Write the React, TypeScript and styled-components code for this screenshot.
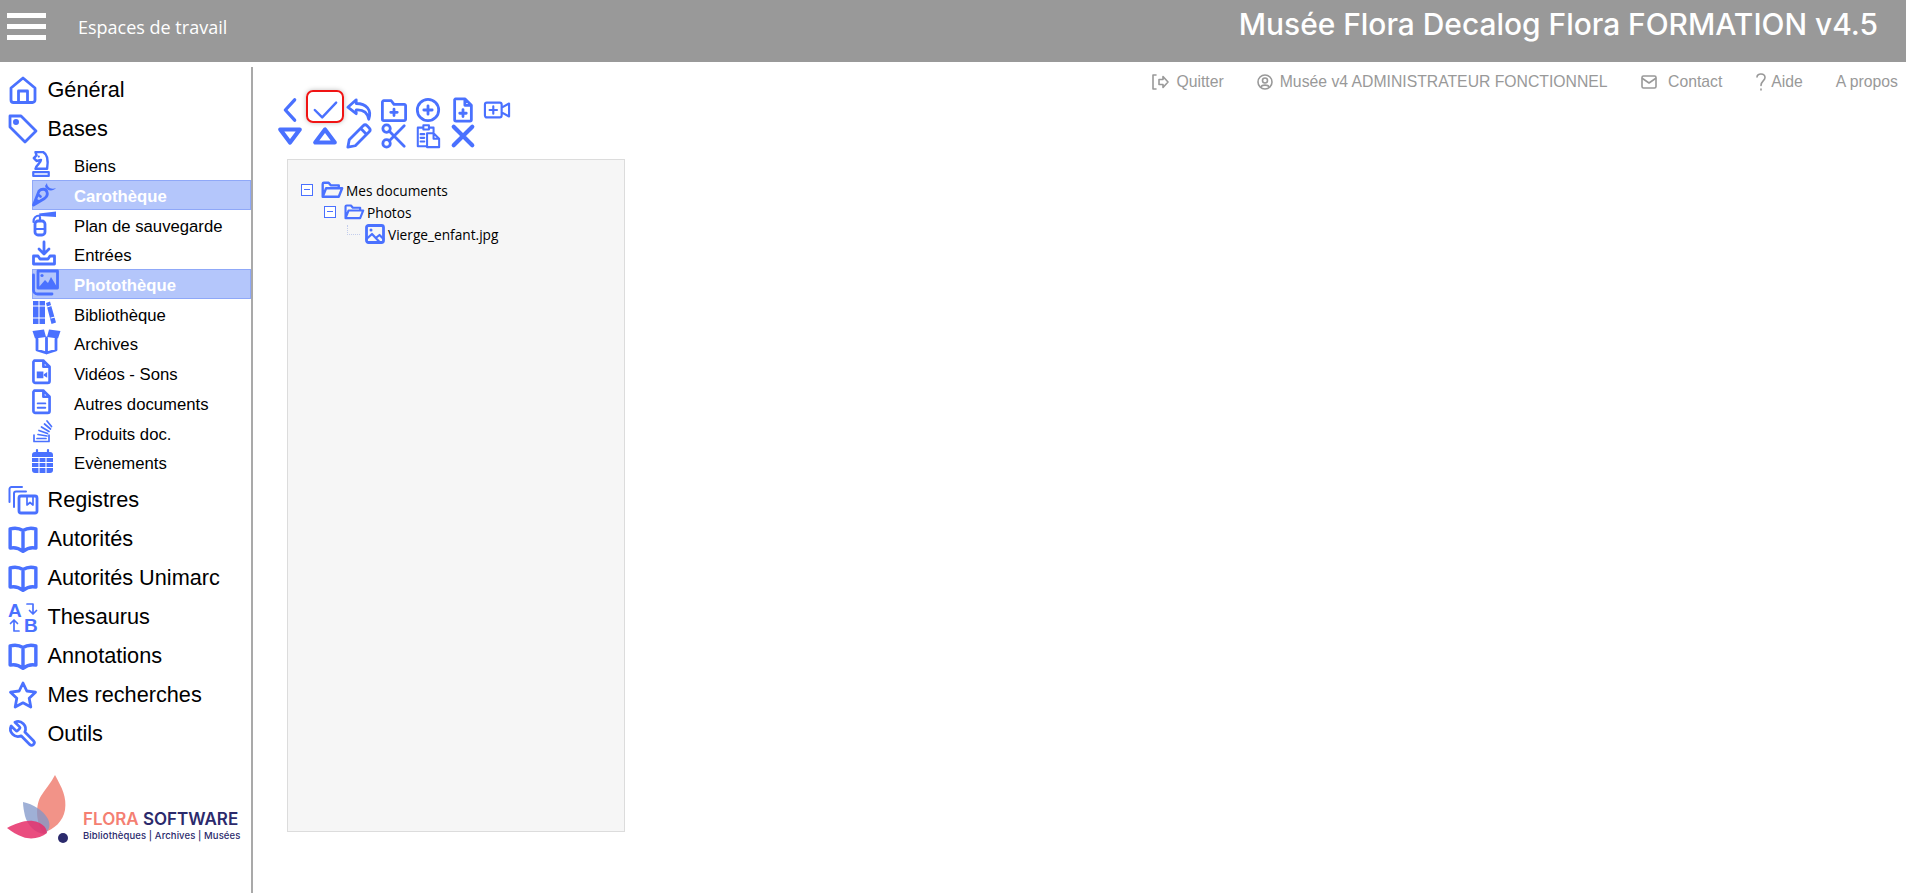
import React from 'react';
import styled, { createGlobalStyle } from 'styled-components';

const BLUE = '#4a71ff';

const GlobalStyle = createGlobalStyle`
  html, body { margin: 0; padding: 0; background: #fff; height: 100%; overflow: hidden; }
  body { font-family: "Liberation Sans", Arial, sans-serif; }
`;

const Page = styled.div`
  display: flex;
  flex-direction: column;
  width: 1906px;
  height: 893px;
`;

const Header = styled.header`
  display: flex;
  align-items: flex-start;
  justify-content: space-between;
  height: 62px;
  flex: none;
  background: #999999;
  color: #fff;
  padding: 13px 28px 0 7px;
  box-sizing: border-box;
`;

const HeaderLeft = styled.div`
  display: flex;
  align-items: flex-start;
`;

const Burger = styled.div`
  display: flex;
  flex-direction: column;
  gap: 6px;
  width: 39px;
  span { display: block; height: 5px; background: #fff; }
`;

const WorkspaceLink = styled.span`
  margin-left: 32px;
  margin-top: 2px;
  font-family: "Open Sans", sans-serif;
  font-size: 18px;
  line-height: 24px;
`;

const AppTitle = styled.h1`
  margin: -6px 0 0;
  font-family: "Inter", sans-serif;
  font-weight: 500;
  font-size: 29.9px;
  line-height: 34px;
  white-space: nowrap;
`;

const Body = styled.div`
  display: flex;
  flex: 1;
  min-height: 0;
`;

const Sidebar = styled.nav`
  width: 253px;
  flex: none;
  box-sizing: border-box;
  margin-top: 5px;
  padding-top: 3.5px;
  border-right: 2px solid #a9a9a9;
`;

const MainRow = styled.div`
  display: flex;
  align-items: center;
  height: 39px;
  padding-left: 7px;
  font-size: 21.7px;
  color: #000;
`;

const MainIcon = styled.span`
  display: flex;
  justify-content: center;
  width: 31px;
  margin-right: 9.5px;
`;

const SubList = styled.div`
  margin: 2px 0 3px 32px;
`;

const SubRow = styled.div<{ $selected?: boolean }>`
  display: flex;
  align-items: center;
  height: 29.7px;
  box-sizing: border-box;
  padding-top: 4px;
  font-size: 16.7px;
  color: ${p => (p.$selected ? '#fff' : '#000')};
  font-weight: ${p => (p.$selected ? 700 : 400)};
  background: ${p => (p.$selected ? '#b4c6fb' : 'transparent')};
  box-shadow: ${p => (p.$selected ? 'inset 0 0 0 1px #8fa8f8' : 'none')};
`;

const SubIcon = styled.span`
  display: flex;
  width: 42px;
  flex: none;
  margin-bottom: 7px;
`;

const Brand = styled.div`
  display: flex;
  margin-top: 19px;
  padding-left: 5px;
`;

const BrandText = styled.div`
  margin-left: 3px;
  padding-top: 37px;
  color: #2b2a6c;
`;

const BrandName = styled.div`
  font-family: "Inter", sans-serif;
  font-weight: 600;
  font-size: 17px;
  line-height: 20px;
  white-space: nowrap;
  b { font-weight: 600; color: #f47f72; }
`;

const BrandTag = styled.div`
  font-family: "Inter", sans-serif;
  font-weight: 500;
  font-size: 9.5px;
  letter-spacing: 0.1px;
  line-height: 13px;
  white-space: nowrap;
`;

const Main = styled.main`
  flex: 1;
  min-width: 0;
  padding: 5px 8px 0 20px;
`;

const TopLinks = styled.div`
  display: flex;
  justify-content: flex-end;
  align-items: center;
  gap: 33px;
  height: 30px;
  font-size: 15.75px;
  color: #999;
`;

const TopLink = styled.span<{ $gap?: number }>`
  display: flex;
  align-items: center;
  gap: ${p => p.$gap ?? 7}px;
  white-space: nowrap;
`;

const Toolbar = styled.div`
  display: grid;
  grid-template-columns: repeat(7, 34.5px);
  grid-auto-rows: 26px;
`;

const ToolButton = styled.span<{ $active?: boolean }>`
  position: relative;
  display: flex;
  align-items: center;
  justify-content: center;
  svg { stroke-width: 3; }
  ${p =>
    p.$active &&
    `&::after {
      content: '';
      position: absolute;
      left: -2px; right: -2px; top: -7px; bottom: 0;
      border: 2px solid #f01414;
      border-radius: 7px;
      box-shadow: 0 0 5px rgba(0,0,0,0.25);
    }`}
`;

const TreePanel = styled.section`
  width: 338px;
  height: 673px;
  box-sizing: border-box;
  margin: 10px 0 0 14px;
  padding: 19px 0 0 13px;
  background: #f6f6f6;
  border: 1px solid #dcdcdc;
  font-family: "Open Sans", sans-serif;
  font-size: 13.7px;
  color: #000;
`;

const TreeRow = styled.div<{ $level: number }>`
  display: flex;
  align-items: center;
  height: 22px;
  padding-left: ${p => p.$level * 23}px;
  white-space: nowrap;
`;

const Expander = styled.span`
  width: 10px;
  height: 10px;
  flex: none;
  position: relative;
  border: 1px solid ${BLUE};
  background: #fff;
  margin-right: 8px;
  &::after {
    content: '';
    position: absolute;
    left: 2px; right: 2px; top: 4px;
    height: 1px;
    background: ${BLUE};
  }
`;

const Connector = styled.span`
  width: 12px;
  height: 9px;
  flex: none;
  margin: -9px 5px 0 0;
  border-left: 1px dotted #c3cdec;
  border-bottom: 1px dotted #c3cdec;
`;

const NodeLabel = styled.span`
  margin-left: 3px;
`;

const Svg = styled.svg`
  display: block;
  flex: none;
  overflow: visible;
  fill: none;
  stroke: ${BLUE};
  stroke-width: 2.8;
  stroke-linecap: round;
  stroke-linejoin: round;
  .fill { fill: ${BLUE}; stroke: none; }
  .cut { stroke: #fff; stroke-width: 1.1; }
  .thin { stroke-width: 1.7; }
  text { fill: ${BLUE}; stroke: none; font-family: "Liberation Sans", sans-serif; font-weight: 700; }
`;

const GraySvg = styled(Svg)`
  stroke: #999;
  stroke-width: 1.6;
`;

const BOOK = (
  <path strokeWidth="3.2" d="M14 6 C10 3.5 6 3.5 2 4.5 V22.5 C6 21.5 10 22.5 14 25.5 C18 22.5 22 21.5 26 22.5 V4.5 C22 3.5 18 3.5 14 6 Z M14 6 V25.5" />
);

const glyphs: Record<string, { box: string; node: React.ReactNode }> = {
  home: { box: '0 0 28 28', node: <path d="M2 12 L14 2 L26 12 V24 a2.5 2.5 0 0 1 -2.5 2.5 H4.5 A2.5 2.5 0 0 1 2 24 Z M9.5 26 V15 H18.5 V26" /> },
  tag: { box: '0 0 30 30', node: <><path d="M2 2 H13 L28 17 L17 28 L2 13 Z" /><circle cx="8" cy="8" r="1.6" /></> },
  knight: { box: '1 1 16 23.5', node: <><path d="M4 2 H11 C15 4 15.5 11 14.5 17 H4 C4 14 9 12 9 9 L5 10 L2.5 7.5 L5 5 Z" strokeWidth="2.2" /><path d="M2 20 H16 V23.5 H2 Z" strokeWidth="2" /><circle className="fill" cx="7" cy="6" r="1" /></> },
  carrot: { box: '0 0 24 24', node: <><path d="M1.5 23 L7 9 C9.5 6.5 14 6.5 15 10 C16 13 14.5 15 12.5 16.5 Z M6 12.5 L8.5 14.5 M4 18 L6.5 19.5" /><path className="fill" d="M15 1 C15 5 19 8 24 6 C21 10 14 9 13 4 Z" /></> },
  extinguisher: { box: '0 0 24 25', node: <><rect x="3" y="10" width="10" height="14" rx="3" /><path d="M3 18 H13 M8 10 V6 M1.5 11 C1.5 7 4 4.5 8 4.5" strokeWidth="2.2" /><path className="fill" d="M7 2.5 L24 0.5 V6 L8 5 Z" /></> },
  inbox: { box: '0 0 24 24', node: <><path d="M12 1 V12 M7 8 L12 13 L17 8" /><path d="M6 15 H1.5 V23 H22.5 V15 H18 L16 18 H8 Z" /></> },
  photos: { box: '0 0 27 27', node: <><path d="M6 2 H25.5 V19 H6 Z" /><path d="M1.5 6 V21 a4 4 0 0 0 4 4 H20" /><path className="fill" d="M7 18 L13 11 L16 14 L19 8 L25 18 Z" /><circle className="fill" cx="10" cy="6.5" r="1.6" /></> },
  library: { box: '0 0 24 25', node: <><path className="fill" d="M1 1 H6.5 V24 H1 Z M7.5 1 H13 V24 H7.5 Z M14 3 L18 1.5 L24 22.5 L19.5 24 Z" /><path className="cut" d="M1 6 H13 M1 18 H13 M15 7 L19.5 5.5 M19 18 L23 17" /></> },
  box: { box: '0 0 29 25', node: <><path d="M5 10 V21 L14.5 24 L24 21 V10 M14.5 9 V24" /><path className="fill" d="M0.5 2 L12 0.5 L14 8 L3 9.5 Z M28.5 2 L17 0.5 L15 8 L26 9.5 Z" /></> },
  video: { box: '0 0 20 26', node: <><path d="M2.5 1.5 H12 L18.5 8 V23 a2 2 0 0 1 -2 2 H3.5 a2 2 0 0 1 -2 -2 V3 Z M12 1.5 V8 H18.5" /><path className="fill" d="M5 13 H12 V20 H5 Z M12.5 16 L16 13.5 V19.5 L12.5 17.5 Z" /></> },
  doc: { box: '0 0 20 26', node: <><path d="M2.5 1.5 H12 L18.5 8 V23 a2 2 0 0 1 -2 2 H3.5 a2 2 0 0 1 -2 -2 V3 Z M12 1.5 V8 H18.5" /><path d="M6 15 H14 M6 19.5 H14" strokeWidth="2" /></> },
  stack: { box: '0 0 20 24', node: <><path className="thin" d="M2 16 V22.5 H17 V16 M5 19.5 H14 M6 15.5 L15 17 M7 11.5 L15.5 14.5 M9.5 8 L17 12.5 M12.5 5 L18.5 10 M15 2 L19.5 7.5" /></> },
  calendar: { box: '0 0 21 24', node: <><path className="fill" d="M3 3 H18 a3 3 0 0 1 3 3 V21 a3 3 0 0 1 -3 3 H3 a3 3 0 0 1 -3 -3 V6 a3 3 0 0 1 3 -3 Z" /><path d="M5 1 V4 M16 1 V4" strokeWidth="2.2" /><path className="cut" d="M0 8.5 H21 M0 13.5 H21 M0 18.5 H21 M7 8.5 V24 M14 8.5 V24" /></> },
  copies: { box: '0 0 30 30', node: <><path d="M1.5 17 V4 a2 2 0 0 1 2 -2 H14 M6 22 V8.5 a2 2 0 0 1 2 -2 H18" strokeWidth="2" /><path d="M11 13 a2 2 0 0 1 2 -2 H27 a2 2 0 0 1 2 2 V26 a2 2 0 0 1 -2 2 H13 a2 2 0 0 1 -2 -2 Z" /><path className="thin" d="M19 11 V20 L22 17.5 L25 20 V11" /></> },
  book: { box: '0 0 28 28', node: BOOK },
  thesaurus: { box: '0 0 30 30', node: <><text x="0" y="14.5" fontSize="19">A</text><text x="16" y="30" fontSize="19">B</text><path className="thin" d="M19 2 H25 V11 M21.5 8.5 L25 12 L28.5 8.5 M11 29 H6 V19 M2.5 21.5 L6 18 L9.5 21.5" /></> },
  star: { box: '0 0 30 30', node: <path d="M15 3 L18.8 11 L27.5 12.2 L21.2 18.2 L22.8 27 L15 22.8 L7.2 27 L8.8 18.2 L2.5 12.2 L11.2 11 Z" /> },
  wrench: { box: '0 0 24 24', node: <g transform="translate(24 0) scale(-1 1)"><path strokeWidth="2.2" d="M14.7 6.3a1 1 0 0 0 0 1.4l1.6 1.6a1 1 0 0 0 1.4 0l3.77-3.77a6 6 0 0 1-7.94 7.94l-6.91 6.91a2.12 2.12 0 0 1-3-3l6.91-6.91a6 6 0 0 1 7.94-7.94l-3.76 3.76z" /></g> },
  back: { box: '0 0 28 28', node: <path d="M19 3 L9 14 L19 25" strokeWidth="3.6" /> },
  check: { box: '0 0 28 28', node: <path d="M3 14 L11 22 L26 6" strokeWidth="2.6" /> },
  undo: { box: '0 0 28 28', node: <path d="M11 3 L2 11 L11 18 V14 C18 13.5 23 16 24.5 24 C28 14 22 7 11 7 Z" /> },
  folderAdd: { box: '0 0 28 28', node: <path d="M3 4 H11 L14 8 H25 a1.5 1.5 0 0 1 1.5 1.5 V24 a1.5 1.5 0 0 1 -1.5 1.5 H3 A1.5 1.5 0 0 1 1.5 24 V5.5 A1.5 1.5 0 0 1 3 4 Z M14 13 V20 M10.5 16.5 H17.5" /> },
  circleAdd: { box: '0 0 28 28', node: <><circle cx="14" cy="14" r="11.5" /><path d="M14 9.5 V18.5 M9.5 14 H18.5" /></> },
  fileAdd: { box: '0 0 28 28', node: <path d="M6 2 H16 L23 9 V24.5 a1.5 1.5 0 0 1 -1.5 1.5 H6.5 A1.5 1.5 0 0 1 5 24.5 V3 Z M16 2 V9 H23 M14 13.5 V21 M10.5 17.5 H17.5" /> },
  videoAdd: { box: '0 0 28 28', node: <path strokeWidth="2.3" d="M3 6 H17 a2 2 0 0 1 2 2 V20 a2 2 0 0 1 -2 2 H3 a2 2 0 0 1 -2 -2 V8 a2 2 0 0 1 2 -2 Z M10 10 V18 M6 14 H14 M19 11.5 L27 7 V21 L19 16.5" /> },
  down: { box: '0 0 28 28', node: <path d="M3.5 7 H24.5 L14 21 Z" strokeWidth="4.5" /> },
  up: { box: '0 0 28 28', node: <path d="M3.5 21 H24.5 L14 7 Z" strokeWidth="4.5" /> },
  pencil: { box: '0 0 28 28', node: <path d="M2 26 L3.5 18 L18.5 3 a3 3 0 0 1 4.2 0 L25 5.3 a3 3 0 0 1 0 4.2 L10 24.5 Z M16 6 L22 12" /> },
  scissors: { box: '0 0 28 28', node: <><circle cx="6" cy="6" r="4" /><circle cx="6" cy="22" r="4" /><path d="M9 9 L25 25 M9 19 L25 3" /></> },
  paste: { box: '0 0 28 28', node: <path strokeWidth="2.2" d="M9 5 H3 V25 H12 M9 2.5 H15 V7 H9 Z M15 5 H20 V10 M6 12 H10 M6 16 H10 M6 20 H10 M13 11 H20 L26 17 V26 H13 Z M20 11 V17 H26" /> },
  close: { box: '0 0 28 28', node: <path d="M4 4 L24 24 M24 4 L4 24" strokeWidth="4.5" /> },
  folder: { box: '0 0 26 20', node: <path d="M2 18 V3 a1.5 1.5 0 0 1 1.5 -1.5 H9 L11.5 4.5 H21 V8 M2 18 L6 8 H25 L21 18 Z" /> },
  image: { box: '0 0 20 20', node: <><rect x="1.5" y="1.5" width="17" height="17" rx="2" /><path d="M1.5 15 L7 10 L15 18.5 M12 13 L14.5 11 L18.5 15" strokeWidth="2.2" /><circle className="fill" cx="6" cy="6" r="1.5" /></> },
};

function Icon({ name, w, h }: { name: string; w: number; h: number }) {
  const g = glyphs[name];
  return (
    <Svg viewBox={g.box} width={w} height={h}>
      {g.node}
    </Svg>
  );
}

const subItems = [
  { label: 'Biens', icon: 'knight', w: 18, h: 26 },
  { label: 'Carothèque', icon: 'carrot', w: 24, h: 24, selected: true },
  { label: 'Plan de sauvegarde', icon: 'extinguisher', w: 24, h: 25 },
  { label: 'Entrées', icon: 'inbox', w: 24, h: 24 },
  { label: 'Photothèque', icon: 'photos', w: 27, h: 27, selected: true },
  { label: 'Bibliothèque', icon: 'library', w: 24, h: 25 },
  { label: 'Archives', icon: 'box', w: 29, h: 25 },
  { label: 'Vidéos - Sons', icon: 'video', w: 19, h: 25 },
  { label: 'Autres documents', icon: 'doc', w: 19, h: 25 },
  { label: 'Produits doc.', icon: 'stack', w: 20, h: 24 },
  { label: 'Evènements', icon: 'calendar', w: 21, h: 24 },
];

const lowerItems = [
  { label: 'Registres', icon: 'copies' },
  { label: 'Autorités', icon: 'book' },
  { label: 'Autorités Unimarc', icon: 'book' },
  { label: 'Thesaurus', icon: 'thesaurus' },
  { label: 'Annotations', icon: 'book' },
  { label: 'Mes recherches', icon: 'star' },
  { label: 'Outils', icon: 'wrench' },
];

const tools = ['back', 'check', 'undo', 'folderAdd', 'circleAdd', 'fileAdd', 'videoAdd', 'down', 'up', 'pencil', 'scissors', 'paste', 'close'];

function FloraMark() {
  return (
    <svg width="75" height="76" viewBox="0 0 75 76">
      <path fill="#f1877b" fillOpacity="0.9" d="M50 3 C57 16 62 25 60 38 C58 49 50 57 38 61 C30 48 31 32 36 24 C40 17 46 11 50 3 Z" />
      <path fill="#7f96c8" fillOpacity="0.75" d="M18 30 C28 32 38 38 43 47 C46 54 44 58 40 62 C30 62 22 52 20 44 C19 39 18 35 18 30 Z" />
      <path fill="#e62e68" fillOpacity="0.85" d="M2 56 C10 52 20 48 28 49 C36 50 42 55 42 61 C36 66 26 68 18 65 C12 63 7 60 2 56 Z" />
      <circle cx="58" cy="66" r="5" fill="#2b2a6c" />
    </svg>
  );
}

export default function App() {
  return (
    <Page>
      <GlobalStyle />
      <Header>
        <HeaderLeft>
          <Burger><span /><span /><span /></Burger>
          <WorkspaceLink>Espaces de travail</WorkspaceLink>
        </HeaderLeft>
        <AppTitle>Musée Flora Decalog Flora FORMATION v4.5</AppTitle>
      </Header>
      <Body>
        <Sidebar>
          <MainRow><MainIcon><Icon name="home" w={28} h={28} /></MainIcon>Général</MainRow>
          <MainRow><MainIcon><Icon name="tag" w={30} h={30} /></MainIcon>Bases</MainRow>
          <SubList>
            {subItems.map(item => (
              <SubRow key={item.label} $selected={item.selected}>
                <SubIcon><Icon name={item.icon} w={item.w} h={item.h} /></SubIcon>
                {item.label}
              </SubRow>
            ))}
          </SubList>
          {lowerItems.map(item => (
            <MainRow key={item.label}>
              <MainIcon><Icon name={item.icon} w={30} h={30} /></MainIcon>
              {item.label}
            </MainRow>
          ))}
          <Brand>
            <FloraMark />
            <BrandText>
              <BrandName><b>FLORA</b> SOFTWARE</BrandName>
              <BrandTag>Bibliothèques | Archives | Musées</BrandTag>
            </BrandText>
          </Brand>
        </Sidebar>
        <Main>
          <TopLinks>
            <TopLink>
              <GraySvg viewBox="0 0 18 18" width={18} height={18}>
                <path d="M5 2 H2 V16 H5 M8 6.5 H12 V3.5 L17 9 L12 14.5 V11.5 H8 Z" />
              </GraySvg>
              Quitter
            </TopLink>
            <TopLink>
              <GraySvg viewBox="0 0 16 16" width={16} height={16}>
                <circle cx="8" cy="8" r="7" />
                <circle cx="8" cy="6.5" r="2.5" />
                <path d="M4 13 C5 10.5 11 10.5 12 13" />
              </GraySvg>
              Musée v4 ADMINISTRATEUR FONCTIONNEL
            </TopLink>
            <TopLink>
              <GraySvg viewBox="0 0 16 14" width={16} height={14}>
                <rect x="1" y="1" width="14" height="12" rx="1.5" />
                <path d="M1.5 3.5 L8 8 L14.5 3.5" />
              </GraySvg>
              &nbsp;Contact
            </TopLink>
            <TopLink $gap={4}>
              <GraySvg viewBox="0 0 12 20" width={12} height={20}>
                <path d="M2 5 C2 1 10 1 10 5.5 C10 9 6 9 6 13.5 M6 17 V18" />
              </GraySvg>
              Aide
            </TopLink>
            <TopLink>A propos</TopLink>
          </TopLinks>
          <Toolbar>
            {tools.map(t => (
              <ToolButton key={t} $active={t === 'check'}>
                <Icon name={t} w={26} h={26} />
              </ToolButton>
            ))}
          </Toolbar>
          <TreePanel>
            <TreeRow $level={0}>
              <Expander />
              <Icon name="folder" w={22} h={18} />
              <NodeLabel>Mes documents</NodeLabel>
            </TreeRow>
            <TreeRow $level={1}>
              <Expander />
              <Icon name="folder" w={20} h={16} />
              <NodeLabel>Photos</NodeLabel>
            </TreeRow>
            <TreeRow $level={2}>
              <Connector />
              <Icon name="image" w={20} h={20} />
              <NodeLabel>Vierge_enfant.jpg</NodeLabel>
            </TreeRow>
          </TreePanel>
        </Main>
      </Body>
    </Page>
  );
}
